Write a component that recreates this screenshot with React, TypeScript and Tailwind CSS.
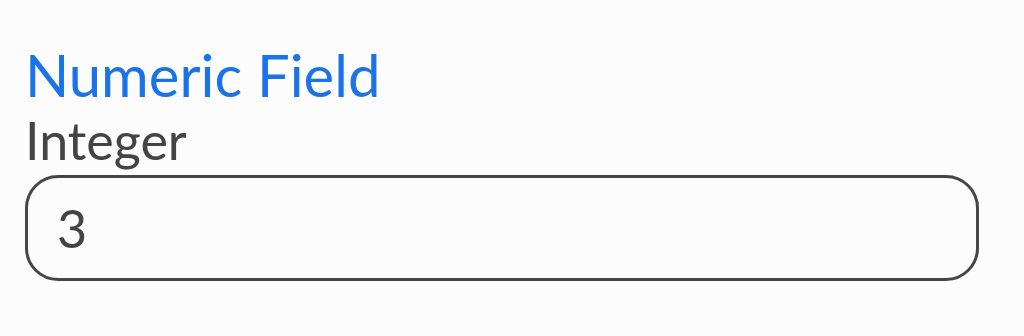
import { useState } from 'react';

export default function App() {
  const [value, setValue] = useState('3');

  return (
    <div className="min-h-[336px] bg-[#fcfcfc] pl-[25px] pt-[40px] font-['Lato',sans-serif]">
      <h1 className="text-[58px] leading-[70px] font-normal text-[#1a73e8]">Numeric Field</h1>
      <label htmlFor="integer" className="block text-[52px] leading-[60px] text-[#444444]">
        Integer
      </label>
      <input
        id="integer"
        type="text"
        inputMode="numeric"
        value={value}
        onChange={(e) => setValue(e.target.value.replace(/[^0-9-]/g, ''))}
        className="mt-[5px] block h-[106px] w-[954px] rounded-[33px] border-[3px] border-[#464646] bg-transparent px-[29px] text-[52px] text-[#444444] outline-none"
      />
    </div>
  );
}
